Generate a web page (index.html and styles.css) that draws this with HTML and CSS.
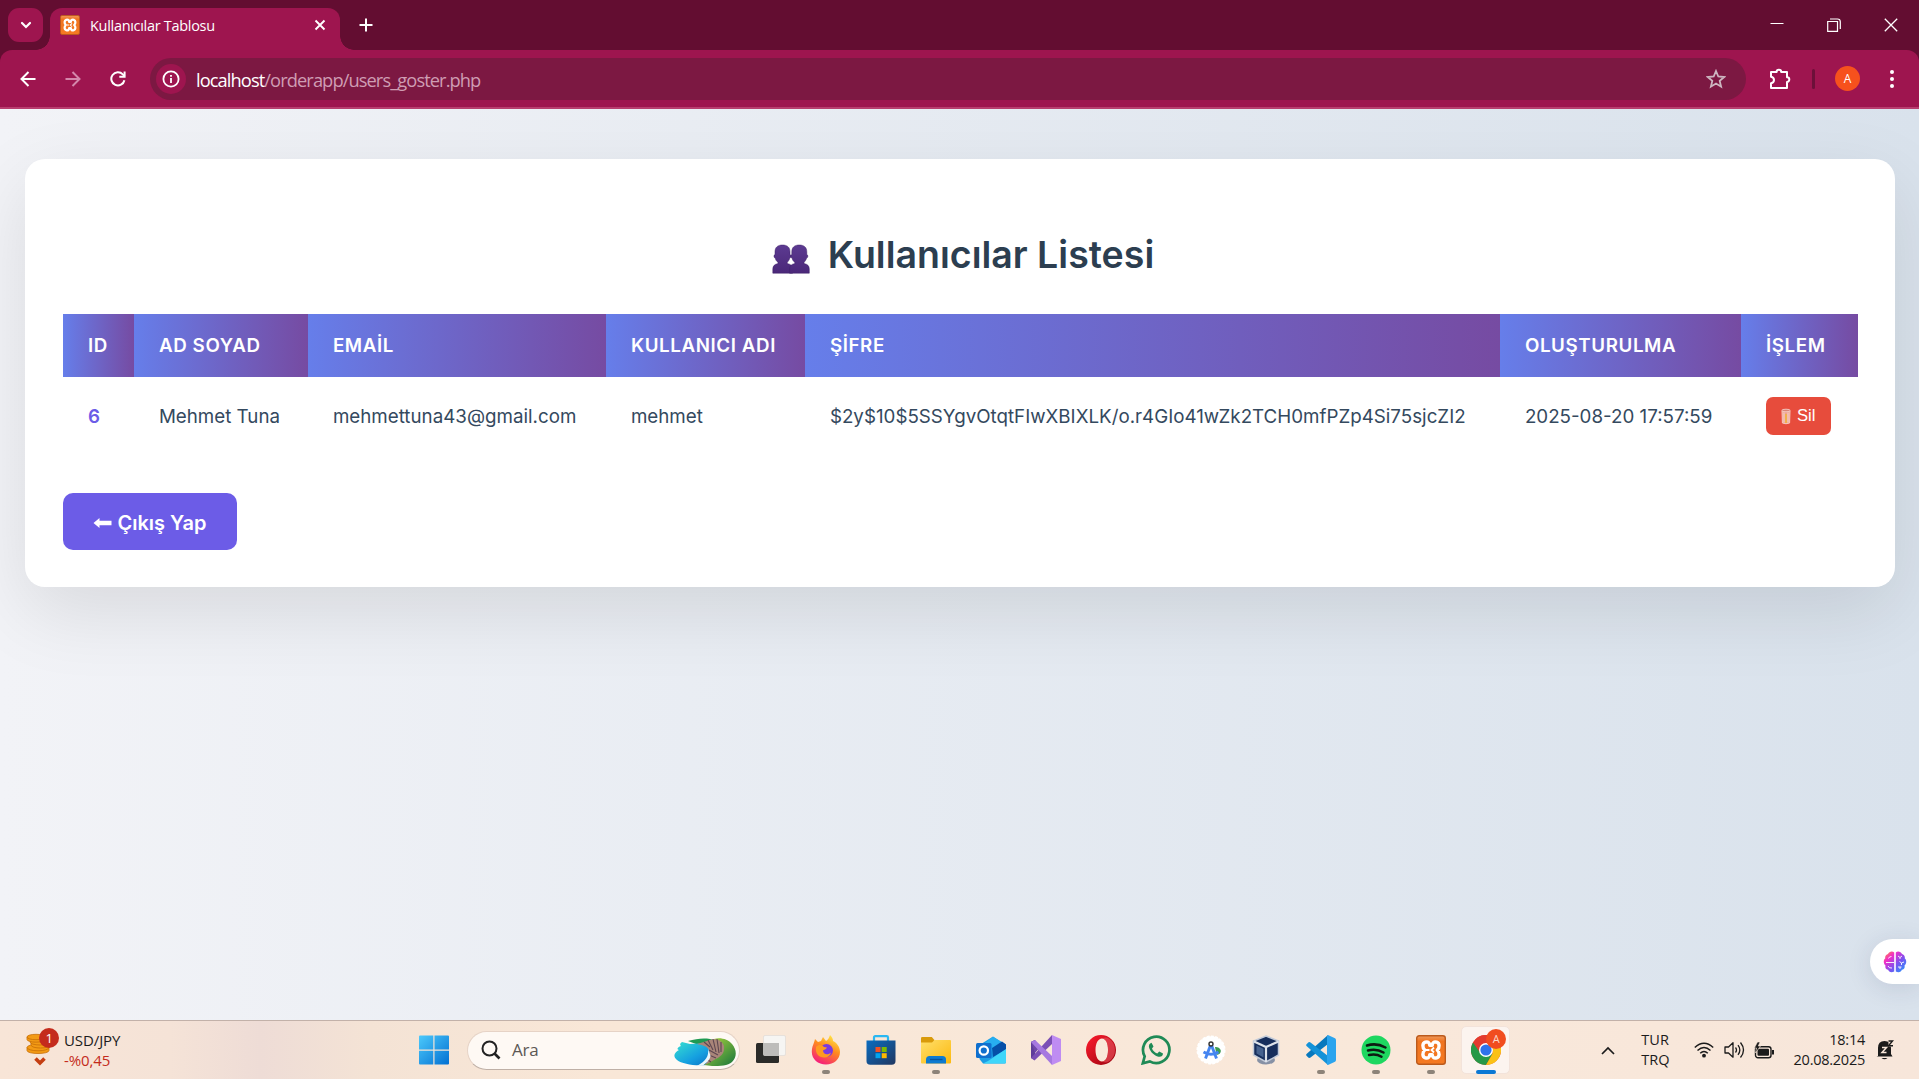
FILE: index.html
```html
<!DOCTYPE html>
<html lang="tr">
<head>
<meta charset="utf-8">
<title>Kullanıcılar Tablosu</title>
<link rel="stylesheet" href="styles.css">
</head>
<body>
<svg width="0" height="0" class="defs">
  <defs>
    <linearGradient id="win" x1="0" y1="0" x2="1" y2="1"><stop offset="0" stop-color="#4cc9fb"/><stop offset="1" stop-color="#0270d2"/></linearGradient>
    <linearGradient id="ff" x1=".8" y1="0" x2=".3" y2="1"><stop offset="0" stop-color="#fff04a"/><stop offset=".45" stop-color="#ff8b1d"/><stop offset="1" stop-color="#f5197f"/></linearGradient>
    <linearGradient id="store" x1="0" y1="0" x2="1" y2="1"><stop offset="0" stop-color="#0a6cc0"/><stop offset="1" stop-color="#213760"/></linearGradient>
    <linearGradient id="folder" x1="0" y1="0" x2="1" y2="1"><stop offset="0" stop-color="#ffdf6b"/><stop offset="1" stop-color="#fcb90f"/></linearGradient>
    <linearGradient id="opera" x1="0" y1="0" x2="1" y2="1"><stop offset="0" stop-color="#ff1b2d"/><stop offset="1" stop-color="#98040f"/></linearGradient>
    <linearGradient id="people" x1="0" y1="0" x2="0" y2="1"><stop offset="0" stop-color="#5c3a91"/><stop offset="1" stop-color="#4b2879"/></linearGradient>
    <linearGradient id="sea" x1="0" y1="0" x2="1" y2="1"><stop offset="0" stop-color="#37e0d0"/><stop offset=".6" stop-color="#159fe0"/><stop offset="1" stop-color="#0b6fc2"/></linearGradient>
    <linearGradient id="hill" x1="0" y1="0" x2="1" y2="1"><stop offset="0" stop-color="#b5d83c"/><stop offset="1" stop-color="#15753c"/></linearGradient>
    <linearGradient id="brain" x1="0" y1="0" x2="1" y2="1"><stop offset="0" stop-color="#ff9a2a"/><stop offset=".28" stop-color="#f22cc8"/><stop offset=".6" stop-color="#7a52f0"/><stop offset="1" stop-color="#1aa0ff"/></linearGradient>
    <linearGradient id="xam" x1="0" y1="0" x2="0" y2="1"><stop offset="0" stop-color="#ef9a5e"/><stop offset=".2" stop-color="#f0741f"/><stop offset="1" stop-color="#f57a22"/></linearGradient>
    <symbol id="xampp" viewBox="0 0 30 30">
      <rect x=".7" y=".7" width="28.6" height="28.6" rx="2.5" fill="url(#xam)" stroke="#bb5a1c" stroke-width="1.4"/>
      <path d="M9.300 7.200c3-.8 4.200.6 4.400 3h2.600c.2-2.400 1.400-3.800 4.400-3 3.200 1 3 5.600.6 7.800 2.400 2.200 2.600 6.800-.6 7.800-3 .8-4.200-.6-4.400-3h-2.600c-.2 2.400-1.400 3.800-4.400 3-3.200-1-3-5.600-.6-7.800-2.400-2.200-2.600-6.800.6-7.800z" fill="none" stroke="#fff" stroke-width="3.400" stroke-linejoin="round"/>
      <path d="M10 15h3.500M18 12.500l-2.500 2.500 2.500 2.500" fill="none" stroke="#fff" stroke-width="1.800"/>
    </symbol>
  </defs>
</svg>
<div class="window">
  <header class="tabstrip">
    <button class="tab-search"><svg width="14" height="14" viewBox="0 0 14 14"><path d="M3 5l4 4 4-4" fill="none" stroke="#fff" stroke-width="2.200" stroke-linecap="round"/></svg></button>
    <div class="tab">
      <svg width="20" height="20"><use href="#xampp"/></svg>
      <span class="tab-title">Kullanıcılar Tablosu</span>
      <svg width="12" height="12" viewBox="0 0 12 12"><path d="M1.500 1.500l9 9m0-9l-9 9" stroke="#fff" stroke-width="1.900"/></svg>
    </div>
    <svg class="new-tab" width="14" height="14" viewBox="0 0 14 14"><path d="M7 .5v13M.5 7h13" stroke="#fff" stroke-width="2"/></svg>
    <div class="window-controls">
      <svg width="14" height="14" viewBox="0 0 14 14"><path d="M.5 5.500h13" stroke="#fff"/></svg>
      <svg width="14" height="14" viewBox="0 0 14 14"><path d="M.7 3.500h9.800v9.800H.7zM3 1h7.500c1.800 0 2.800 1 2.800 2.800V11" fill="none" stroke="#fff" stroke-width="1.200"/></svg>
      <svg width="14" height="14" viewBox="0 0 14 14"><path d="M.8.8l12.400 12.400m0-12.400L.8 13.200" stroke="#fff" stroke-width="1.300"/></svg>
    </div>
  </header>
  <div class="toolbar-back">
    <nav class="toolbar">
      <svg class="nav-icon" width="16" height="16" viewBox="0 0 16 16"><path d="M15.500 8H2M8.500 1L1.500 8l7 7" fill="none" stroke="#fff" stroke-width="2"/></svg>
      <svg class="nav-icon disabled" width="16" height="16" viewBox="0 0 16 16"><path d="M.5 8H14M7.500 1l7 7-7 7" fill="none" stroke="#d487ab" stroke-width="2"/></svg>
      <svg class="nav-icon" width="16" height="16" viewBox="0 0 16 16"><path d="M14.400 9.200A6.600 6.600 0 1 1 12.800 3.400L14.600 5.300" fill="none" stroke="#fff" stroke-width="2"/><path d="M15.600.5v6.300H9.300V4.800h4.300V.5z" fill="#fff"/></svg>
      <div class="omnibox">
        <span class="site-info"><svg width="18" height="18" viewBox="0 0 18 18"><circle cx="9" cy="9" r="7.600" fill="none" stroke="#fff" stroke-width="1.800"/><path d="M9 8v5M9 5v1.700" stroke="#fff" stroke-width="1.800"/></svg></span>
        <span class="url"><b>localhost</b>/orderapp/users_goster.php</span>
        <svg width="20" height="20" viewBox="0 0 20 20"><path d="M10 2l2.300 5.500 5.900.5-4.500 3.900 1.400 5.800L10 14.600l-5.100 3.100 1.400-5.800L1.800 8l5.900-.5z" fill="none" stroke="#cdb6c0" stroke-width="1.800"/></svg>
      </div>
      <svg class="extensions" width="22" height="22" viewBox="0 0 22 22"><path d="M2 4h5.600a2.300 2.300 0 0 1 4.600 0H18v5.300a2.300 2.300 0 0 1 0 4.600V20H2v-4.800c4-.8 4-5.600 0-6.400z" fill="none" stroke="#fff" stroke-width="2" stroke-linejoin="round"/></svg>
      <span class="divider"></span>
      <span class="avatar">A</span>
      <svg class="menu" width="6" height="20" viewBox="0 0 6 20"><g fill="#fff"><circle cx="3" cy="3" r="2"/><circle cx="3" cy="10" r="2"/><circle cx="3" cy="17" r="2"/></g></svg>
    </nav>
  </div>

  <main class="page">
    <section class="card">
      <h1 class="title">
        <svg width="38" height="30" viewBox="0 0 38 30"><g fill="url(#people)" stroke="#3f2169" stroke-width=".5"><path id="person" d="M3 10.500V8c0-5 3-7 7.500-7s7.500 2 7.500 7v2.500c1.400.3 1.400 3.200-.2 3.500-.5 2-1.600 3.400-2.500 4.200v1.400c3.500.5 5.200 2.400 5.200 5.400v4.200H.8V25c0-3 1.800-4.900 5.200-5.400v-1.400C4.500 17.400 3.700 16 3.200 14 1.600 13.700 1.600 10.800 3 10.500z"/><use href="#person" x="16.800"/></g></svg>
        <span>Kullanıcılar Listesi</span>
      </h1>
      <table class="users">
        <colgroup><col class="c-id"><col class="c-name"><col class="c-mail"><col class="c-user"><col class="c-hash"><col class="c-date"><col class="c-act"></colgroup>
        <thead><tr><th>ID</th><th>AD SOYAD</th><th>EMAİL</th><th>KULLANICI ADI</th><th>ŞİFRE</th><th>OLUŞTURULMA</th><th>İŞLEM</th></tr></thead>
        <tbody><tr>
          <td class="id">6</td><td>Mehmet Tuna</td><td>mehmettuna43@gmail.com</td><td>mehmet</td>
          <td>$2y$10$5SSYgvOtqtFIwXBIXLK/o.r4GIo41wZk2TCH0mfPZp4Si75sjcZI2</td><td>2025-08-20 17:57:59</td>
          <td><button class="delete"><svg width="10" height="17" viewBox="0 0 10 17"><path d="M1 2.500h8l-.4 12.500q-3.600 1.500-7.200 0z" fill="#f0a08c" stroke="#f6cabf" stroke-width="1"/><path d="M3 4.500v10M7 4.500v10" stroke="#f5dfd8" stroke-width=".9"/><path d="M5 6v9" stroke="#f2b33c" stroke-width="1.600"/><ellipse cx="5" cy="2.500" rx="4.200" ry="1.300" fill="#d98577" stroke="#f7d7cf" stroke-width=".8"/></svg>Sil</button></td>
        </tr></tbody>
      </table>
      <a class="logout"><svg width="20" height="12" viewBox="0 0 20 12"><path d="M.5 6L6.500.9v2.900H18.500v4.400H6.500v2.900z" fill="#fff"/></svg>Çıkış Yap</a>
    </section>
    <div class="assistant"><svg width="24" height="22" viewBox="0 0 24 22"><path d="M11.200 1.500v19c-2.600 1.500-5.500.7-6-1.700-2.300-.2-3.300-2.300-2.700-4.300C.3 13 .2 9 2.200 7.600 1.800 5 3.300 3.300 5 3 6 .4 9.500-.3 11.200 1.500zM12.800 1.500v19c2.600 1.500 5.500.7 6-1.700 2.300-.2 3.300-2.300 2.700-4.300 2.200-1.500 2.300-5.500.3-6.900.4-2.600-1.100-4.300-2.800-4.600-1-2.600-4.500-3.300-6.200-1.500z" fill="url(#brain)"/><path d="M3 11.500h8M5.500 7.500Q6 5.500 8.500 5.500M5 15q1 2.500 4 2M15 5l2 1.500L19 5M17 6.500V8M16.500 10.500l2 1.500 2.500-1M18.500 12v2M15 16h3.500m-1.500 0v2" stroke="#fff" stroke-width=".9" fill="none"/></svg></div>
  </main>

  <footer class="taskbar">
    <div class="widget">
      <svg width="36" height="44" viewBox="0 0 36 44"><g fill="#f39a14" stroke="#c76e08" stroke-width=".8"><path d="M2 19.500v3c0 4 22 4 22 0v-3z"/><ellipse cx="13" cy="19.500" rx="11" ry="3.300"/><path d="M6 14v3c0 4 19 4 19 0v-3z"/><ellipse cx="15" cy="14" rx="10" ry="3"/><path d="M2 9v2.500c0 3.500 18 3.500 18 0V9z"/><ellipse cx="11" cy="9" rx="9" ry="2.700"/></g><path d="M10.500 30.500l4.500 4.500 4.500-4.500" fill="none" stroke="#c43e12" stroke-width="3.600"/><circle cx="24" cy="10" r="10" fill="#c42b1c"/></svg>
      <span class="count">1</span>
      <div class="widget-text"><span>USD/JPY</span><span class="down">-%0,45</span></div>
    </div>
    <div class="apps">
      <span class="app"><svg width="30" height="30" viewBox="0 0 30 30"><path d="M0 1.500Q0 .5 1 .5h13.300v14H0zM15.500.5H29q1 0 1 1v13H15.500zM0 15.700h14.300v13.800H1q-1 0-1-1zM15.500 15.700H30v12.800q0 1-1 1H15.500z" fill="url(#win)"/></svg></span>
      <div class="search">
        <svg width="20" height="20" viewBox="0 0 20 20"><circle cx="8.500" cy="8.500" r="7" fill="none" stroke="#222" stroke-width="2"/><path d="M13.500 13.500l5 5" stroke="#222" stroke-width="2.600"/></svg>
        <span>Ara</span>
        <svg class="scene" width="63" height="30" viewBox="0 0 63 30"><path d="M14 4c8-2 14-3 22-2l8 2-14 6z" fill="#1f9a52"/><path d="M8 5l8 2 18-1 4 10-6 12c-12 1-24-1-29-5-5-4-2-8 2-10-3-1-1-3 2-4-2-2 0-3 1-4z" fill="url(#sea)"/><path d="M40 2c6-2 14 0 18 5 5 6 5 13 0 18-4 4-12 4-20 4l-8-1 14-12z" fill="url(#hill)"/><path d="M23 7l10-3c8-4 15-1 17 5 1 8-4 11-10 14l-9 5c4-5 5-10 4-15-2-4-7-5-12-6z" fill="#a98579"/><path d="M30 5l6 5M34 3l5 10M39 2l3 13M43 2l2 14M47 5v10M35 13l9 5M35 18l7 3M34 23l3 2" stroke="#5c4650" stroke-width="1.100"/><path d="M34 12c1 7-2 12-11 17l6-.5c5-4 7-6 7.500-10z" fill="#eaf6fb"/></svg>
      </div>
      <span class="app taskview"><svg width="30" height="30" viewBox="0 0 30 30"><rect x="0" y="8" width="23" height="20" rx="1.500" fill="#2b2b29"/><rect x="7.500" y=".5" width="22" height="20" rx="1.500" fill="#f6f5f3" stroke="#dcd9d5" stroke-width=".6"/><path d="M7.500 8H23v12.500H7.500z" fill="#bdbcba"/></svg></span>
      <span class="app run"><svg width="30" height="30" viewBox="0 0 30 30"><path d="M4 4l3 3 3-1 2-4 3 4c2-1 3-3 4-6 2 2 3 4 3 6 4 2 7 6 7 11 0 7-6 12.500-14 12.500S.8 24 .8 17C.8 11 3 9 4 4z" fill="url(#ff)"/><circle cx="15.500" cy="15.500" r="6.500" fill="#7a3ae0"/><path d="M5 12c3-3 6-2 8 0l3 .5c-1 2-3 2-4 3 0 4 5 5 8 2-1 4-4 5-7 5-5 0-9-4-8-10.500z" fill="#ff9a1f"/></svg></span>
      <span class="app"><svg width="30" height="30" viewBox="0 0 30 30"><path d="M8 6V2.500Q8 1.200 9.300 1.200h11.400q1.300 0 1.300 1.300V6" fill="none" stroke="#2bb8f2" stroke-width="2.200"/><path d="M.5 5.500h29v20.500q0 3.800-3.800 3.800H4.300Q.5 29.800.5 26z" fill="url(#store)"/><path d="M9.500 12h5v5h-5z" fill="#f25022"/><path d="M15.700 12h5v5h-5z" fill="#7fba00"/><path d="M9.500 18.200h5v5h-5z" fill="#00a4ef"/><path d="M15.700 18.200h5v5h-5z" fill="#ffb900"/></svg></span>
      <span class="app run"><svg width="30" height="30" viewBox="0 0 30 30"><path d="M0 3.300q0-1.300 1.300-1.300h9.500l2.600 3v4H0z" fill="#d99a0b"/><path d="M0 7.500h11l2.500-2.500H29q1 0 1 1v21.500q0 1-1 1H1q-1 0-1-1z" fill="url(#folder)"/><path d="M5 28.500v-4q0-3.500 3.500-3.500h13q3.500 0 3.500 3.500v4z" fill="#0f7bd0"/><path d="M9 24.500h12.500" stroke="#0a559c" stroke-width="1.300"/></svg></span>
      <span class="app"><svg width="30" height="30" viewBox="0 0 30 30"><path d="M3.500 10L17 1.500 30 10v17q0 1.500-1.500 1.500H7L3.500 24z" fill="#1d9de4"/><path d="M9 8l8-6.300L30 9.500 17 18z" fill="#27aef0"/><path d="M16 13l10-6.500 4 3v5L17 22z" fill="#054fa8"/><path d="M12 26l18-12v13q0 1.500-1.500 1.500H7z" fill="#3fd6fa"/><rect x="0" y="8" width="15.500" height="15" rx="1.500" fill="#0f6fce"/><circle cx="7.800" cy="15.500" r="4.200" fill="none" stroke="#fff" stroke-width="2.200"/></svg></span>
      <span class="app"><svg width="30" height="30" viewBox="0 0 30 30"><path d="M0 7l4-2v20l-4-2z" fill="#5f3c9a"/><path d="M0 7l4-2 5 7-5 6z" fill="#6f46aa"/><path d="M3.500 25.500L21 9V0L0 23z" fill="#7b4fb5"/><path d="M4 5l17 16v9L0 7z" fill="#a678e0"/><path d="M21 0l9 4v22l-9 4z" fill="#bf8cf2"/></svg></span>
      <span class="app"><svg width="30" height="30" viewBox="0 0 30 30"><path d="M15 0a15 15 0 1 0 0 30a15 15 0 1 0 0-30zM16 3.500c4 0 6 5 6 11.500s-2 11.500-6 11.500S9.500 21.500 9.500 15 12 3.500 16 3.500z" fill="url(#opera)" fill-rule="evenodd"/><path d="M16 3.500c4-2 7-.5 9.500 2.300a14 14 0 0 1 0 18.500C23 27 20 28.500 16 26.500c4 0 6-5 6-11.500S20 3.500 16 3.500z" fill="#e8505b" opacity=".65"/></svg></span>
      <span class="app"><svg width="30" height="30" viewBox="0 0 30 30"><path d="M1.800 28.300l1.900-7A13.200 13.200 0 1 1 8.800 26.400z" fill="none" stroke="#1f8a56" stroke-width="2.700"/><path d="M10.500 7.800c-2 .6-3.200 2.600-2.300 5.200 1.500 4.400 5 7.600 9.300 8.700 2.600.5 4.500-.9 4.500-3.200l-3.800-2-1.900 2c-2.500-1-4.300-2.700-5.300-5.100l1.500-1.800z" fill="#1f8a56"/></svg></span>
      <span class="app"><svg width="30" height="30" viewBox="0 0 30 30"><circle cx="15" cy="15" r="13.800" fill="#fff" stroke="#fff" stroke-width="1.500" stroke-dasharray="3 1.300"/><path d="M19 12a5 4 0 0 1 1.500 8z" fill="#3c9b53"/><path d="M15 9L9.500 23.500M15 9l5.500 14.500M7.500 17q7.500 4.500 15 0" fill="none" stroke="#4585f0" stroke-width="2.900"/><circle cx="15" cy="9" r="2" fill="#fff" stroke="#333" stroke-width="1.400"/></svg></span>
      <span class="app"><svg width="30" height="30" viewBox="0 0 30 30"><ellipse cx="15" cy="25" rx="9" ry="4.500" fill="#8791a5"/><path d="M15 1l12.500 5v14L15 27 2.500 20V6z" fill="#172e5c" stroke="#c3cbd9" stroke-width="1.500"/><path d="M3 6.500L15 12l12.500-5.500M15 12v15" stroke="#dde2ea" stroke-width="2.200" fill="none"/><path d="M5.500 10.500l7 3.300v8.700l-7-4z" fill="#46628f"/></svg></span>
      <span class="app run"><svg width="30" height="30" viewBox="0 0 30 30"><path d="M22 0v9L4.500 22.500Q3 23.500 1.800 22L.5 20.700q-.8-1 .3-2z" fill="#0878bd"/><path d="M22 30v-9L4.500 7.500Q3 6.500 1.800 8L.5 9.300q-.8 1 .3 2z" fill="#1492d8"/><path d="M22 0l7 3.300q1 .6 1 2v19.400q0 1.400-1 2L22 30l-1-1V1z" fill="#2ba4ee"/></svg></span>
      <span class="app run"><svg width="30" height="30" viewBox="0 0 30 30"><circle cx="15" cy="15" r="14.500" fill="#1ed760"/><path d="M6 10.500q9.500-3 18.500 2M7 15.500q8.500-2.200 15.500 2M8 20q7-1.700 12.500 1.700" fill="none" stroke="#0d1a12" stroke-width="2.500" stroke-linecap="round"/></svg></span>
      <span class="app run"><svg width="30" height="30"><use href="#xampp"/></svg></span>
      <span class="app run active"><svg width="30" height="30" viewBox="0 0 30 30"><circle cx="15" cy="15" r="15" fill="#e33b2e"/><path d="M2 7.500A15 15 0 0 0 15 30l6.500-11.300L15 15z" fill="#279847"/><path d="M28 7.500A15 15 0 0 1 15 30l6.500-11.300V8z" fill="#fbc116"/><path d="M2 7.500A15 15 0 0 1 28 7.500H15l-6 10z" fill="#e33b2e"/><circle cx="15" cy="15" r="7" fill="#fff"/><circle cx="15" cy="15" r="5.600" fill="#2f72ea"/></svg><i class="profile">A</i></span>
    </div>
    <div class="tray">
      <svg class="tray-more" width="14" height="9" viewBox="0 0 14 9"><path d="M1 8l6-6 6 6" fill="none" stroke="#1b1b1b" stroke-width="1.700"/></svg>
      <div class="lang"><span>TUR</span><span>TRQ</span></div>
      <svg class="wifi" width="20" height="16" viewBox="0 0 20 16"><path d="M.8 5.500q9.200-8.500 18.400 0M3.500 8.500q6.500-6 13 0M6.200 11.300q3.800-3.500 7.600 0" fill="none" stroke="#1b1b1b" stroke-width="1.500"/><circle cx="10" cy="13.700" r="1.900" fill="#1b1b1b"/></svg>
      <svg class="sound" width="21" height="18" viewBox="0 0 21 18"><path d="M1 6h3.500L9 1.800v14.400L4.500 12H1z" fill="none" stroke="#1b1b1b" stroke-width="1.300" stroke-linejoin="round"/><path d="M11.500 6.500q2 2.500 0 5M14 4.200q3.700 4.800 0 9.600M16.500 1.500q6 7.500 0 15" fill="none" stroke="#1b1b1b" stroke-width="1.300"/></svg>
      <svg class="battery" width="21" height="17" viewBox="0 0 21 17"><rect x="1.500" y="4.700" width="15.500" height="11" rx="2.500" fill="none" stroke="#1b1b1b" stroke-width="1.400"/><rect x="3.500" y="6.700" width="11.500" height="7" rx="1" fill="#1b1b1b"/><path d="M18 8h2v4.500h-2z" fill="#1b1b1b"/><path d="M3.500 0L.3 6h2.200L1.500 11 6.500 4H4.300L6 0z" fill="#1b1b1b" stroke="#f7e6d9" stroke-width=".6"/></svg>
      <div class="clock"><span>18:14</span><span>20.08.2025</span></div>
      <svg class="bell" width="18" height="20" viewBox="0 0 18 20"><path d="M2 16V8q0-7 6.500-7 6.500 0 6.500 7v6l1.500 2.500H.5z" fill="#1b1b1b"/><path d="M5.500 18q3 2.500 6 0z" fill="#1b1b1b"/><path d="M12.500 0h5v6.500h-5z" fill="#f7e6d9"/><path d="M12.500 1h4l-4 4.700h4.500" fill="none" stroke="#1b1b1b" stroke-width="1.400"/><path d="M6 7.500h4.500L6 12.500h4.500" fill="none" stroke="#f7e6d9" stroke-width="1.500"/></svg>
    </div>
  </footer>
</div>
</body>
</html>
```
FILE: styles.css
```css
* { box-sizing: border-box; }
body { margin: 0; font-family: "Inter", sans-serif; overflow: hidden; }
.defs { position: absolute; }
svg { display: block; flex: none; }
button { border: 0; padding: 0; }
.window { display: flex; flex-direction: column; height: 1079px; }

.tabstrip { display: flex; height: 50px; padding-left: 8px; background: #630d31; font-family: "Open Sans", sans-serif; }
.tab-search { display: grid; place-items: center; width: 35px; height: 34px; margin: 8px 7px 0 0; border-radius: 11px; background: #9e154f; }
.tab { position: relative; display: flex; align-items: center; width: 290px; height: 42px; margin-top: 8px; padding: 0 14px 8px 10px; border-radius: 12px 12px 0 0; background: #9e154f; color: #fff; }
.tab::before, .tab::after { content: ""; position: absolute; bottom: 0; width: 14px; height: 14px; }
.tab::before { left: -14px; background: radial-gradient(circle at 0 0, transparent 13.5px, #9e154f 14px); }
.tab::after { right: -14px; background: radial-gradient(circle at 100% 0, transparent 13.5px, #9e154f 14px); }
.tab-title { flex: 1; margin-left: 10px; font-size: 14.5px; letter-spacing: -0.3px; white-space: nowrap; }
.new-tab { margin: 18px 0 0 19px; }
.window-controls { display: flex; gap: 43px; margin: 18px 21px 0 auto; }
.toolbar-back { background: #630d31; }
.toolbar { display: flex; align-items: center; height: 59px; padding: 0 24px 0 20px; border-bottom: 2px solid #b83e6f; border-radius: 12px 12px 0 0; background: #9e154f; }
.nav-icon { margin-right: 29px; }
.nav-icon + .nav-icon + .nav-icon { margin-right: 24px; }
.omnibox { display: flex; align-items: center; flex: 1; height: 42px; margin-top: 1px; padding: 0 20px 0 6px; border-radius: 21px; background: #7c1842; }
.site-info { display: grid; place-items: center; width: 30px; height: 30px; border-radius: 50%; background: #9e154f; }
.url { flex: 1; margin-left: 10px; color: #cf9db3; font: 18.3px "Open Sans", sans-serif; letter-spacing: -0.92px; }
.url b { color: #fff; font-weight: 400; }
.extensions { margin-left: 23px; }
.divider { width: 3px; height: 20px; margin-left: 21px; border-radius: 2px; background: #6c1039; }
.avatar { display: grid; place-items: center; width: 25px; height: 25px; margin: 0 29px 0 20px; border-radius: 50%; background: #f6511d; color: #fff; font: 12px "Open Sans", sans-serif; }

.page { position: relative; height: 911px; padding: 50px 24px 0 25px; overflow: hidden; background: linear-gradient(90deg, #f2f3f7, #d9e2ec); }
.card { height: 428px; padding: 37.5px 37.5px 0; border-radius: 20px; background: #fff; box-shadow: 0 25px 75px rgba(0, 0, 0, 0.1); }
.title { display: flex; justify-content: center; align-items: center; gap: 18px; height: 117.5px; margin: 0; padding: 0 0 2px 6px; color: #2c3e50; font-size: 37.5px; font-weight: 600; }
.title svg { margin-top: 10px; }
.users { width: 1795px; table-layout: fixed; border-collapse: collapse; }
.c-id { width: 71px; }
.c-name { width: 174px; }
.c-mail { width: 298px; }
.c-user { width: 199px; }
.c-hash { width: 695px; }
.c-date { width: 241px; }
.c-act { width: 117px; }
.users th { height: 63px; padding: 0 0 0 25.4px; background: linear-gradient(90deg, #667eea, #764ba2); color: #fff; font-size: 18.75px; font-weight: 600; letter-spacing: 0.6px; text-align: left; white-space: nowrap; }
.users td { height: 78px; padding: 0 0 0 25.4px; color: #34495e; font-size: 18.75px; white-space: nowrap; }
.users .id { color: #6c5ce7; font-weight: 600; }
.delete { display: flex; align-items: center; gap: 6px; width: 65px; height: 38px; padding-left: 15px; border-radius: 7px; background: #e74c3c; color: #fff; font: 16.667px "Liberation Sans", sans-serif; }
.logout { display: flex; align-items: center; gap: 5px; width: 174px; height: 57px; margin-top: 38px; padding: 2px 0 0 30px; border-radius: 10px; background: #6c5ce7; color: #fff; font-size: 20px; font-weight: 600; white-space: nowrap; }
.assistant { position: absolute; right: 0; top: 830px; display: flex; align-items: center; width: 49px; height: 45px; padding-left: 13px; border-radius: 23px 0 0 23px; background: #fff; box-shadow: 0 4px 24px rgba(40, 50, 90, 0.13); }

.taskbar { display: grid; grid-template-columns: 406px auto 1fr; height: 59px; border-top: 1px solid #c2b1a9; background: linear-gradient(90deg, #f8e5d7 0, #f5e3d7 170px, #eedcd6 260px, #f4e3d5 370px, #f9e7d7 600px, #f9e8da 1400px, #f7e6da); color: #1b1b1b; font: 14.500px/20px "Open Sans", sans-serif; letter-spacing: -0.5px; }
.widget { position: relative; display: flex; gap: 3px; padding: 7px 0 0 25px; }
.count { position: absolute; left: 39px; top: 7px; width: 20px; color: #fff; font-size: 13px; text-align: center; }
.widget-text, .lang, .clock { display: flex; flex-direction: column; }
.widget-text { padding-top: 2px; font-size: 15px; letter-spacing: -0.1px; }
.down { color: #c42b1c; }
.apps { display: flex; align-items: center; }
.app { position: relative; display: grid; place-items: center; width: 55px; height: 58px; }
.app.active::before { content: ""; position: absolute; inset: 5px 3px; border: 1px solid #f3e3da; border-radius: 5px; background: #fcf4ef; }
.app svg { position: relative; }
.app.run::after { content: ""; position: absolute; bottom: 5px; width: 8px; height: 4px; border-radius: 2px; background: #8d8379; }
.app.active::after { width: 20px; background: #0b78d4; }
.profile { position: absolute; left: 28px; top: 8px; width: 20px; height: 20px; border-radius: 50%; background: #f14d1f; color: #fbd9cc; font-size: 11px; font-style: normal; text-align: center; }
.search { display: flex; align-items: center; width: 273px; height: 39px; margin: 0 4px 0 6px; padding: 0 2px 0 13px; border: 1px solid #e6d3c6; border-bottom-color: #bfb0a6; border-radius: 20px; background: #fef9f4; color: #5c5854; font-size: 17px; letter-spacing: -0.2px; }
.search span { margin-left: 11px; }
.scene { margin: 4px 0 0 auto; }
.taskview { margin-left: -1px; }
.tray { display: flex; align-items: center; justify-content: flex-end; padding-right: 25px; }
.lang { margin: 0 24px 0 26px; letter-spacing: 0; }
.wifi { margin-right: 10px; }
.sound { margin-right: 9px; }
.battery { margin-right: 19px; }
.clock { margin-right: 11px; text-align: right; letter-spacing: -0.25px; }
```
